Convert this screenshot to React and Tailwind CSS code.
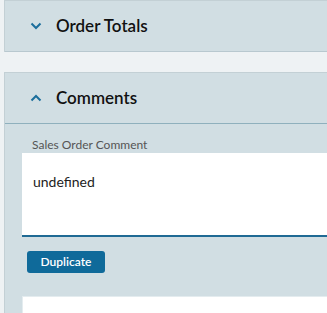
import React from "react";

const Chevron = ({ up }) => (
  <svg width="12" height="8" viewBox="0 0 12 8" className="shrink-0">
    <path
      d={up ? "M1.5 6.5 L6 2 L10.5 6.5" : "M1.5 1.5 L6 6 L10.5 1.5"}
      fill="none"
      stroke="#1b6e9c"
      strokeWidth="2"
    />
  </svg>
);

const App = () => {
  return (
    <div
      className="w-[327px] h-[313px] overflow-hidden bg-[#eef2f4] pl-[4px]"
      style={{ fontFamily: "Lato, 'Noto Sans', sans-serif" }}
    >
      {/* Order Totals (collapsed) */}
      <div className="bg-[#d1dee3] border-t border-l border-[#c3d0d5]">
        <div className="flex items-center h-[51px] pl-[25px] gap-[14px] border-b border-[#b8c8cf]">
          <Chevron />
          <h2 className="text-[17px] font-semibold text-[#111]">Order Totals</h2>
        </div>
      </div>

      <div className="h-[20px]" />

      {/* Comments (expanded) */}
      <div className="bg-[#d1dee3] border-t border-l border-[#c3d0d5] h-[300px]">
        <div className="flex items-center h-[51px] pl-[25px] gap-[14px] border-b border-[#8fb0bd]">
          <Chevron up />
          <h2 className="text-[17px] font-semibold text-[#111]">Comments</h2>
        </div>
        <div className="pl-[17px]">
          <div className="pt-[12px] pl-[10px] text-[12px] text-[#555] leading-[17px]">
            Sales Order Comment
          </div>
          <div className="bg-white h-[84px] border-b-2 border-[#1f6a94] pt-[18px] pl-[11px] text-[14px] text-[#222]">
            undefined
          </div>
          <div className="flex pt-[14px] pl-[5px]">
            <button className="h-[22px] w-[78px] rounded-[3px] bg-[#0f6a9a] text-white text-[12px] font-semibold">
              Duplicate
            </button>
          </div>
          <div className="mt-[23px] bg-white h-[40px] border-t border-l border-[#e4ecef]" />
        </div>
      </div>
    </div>
  );
};

export default App;
